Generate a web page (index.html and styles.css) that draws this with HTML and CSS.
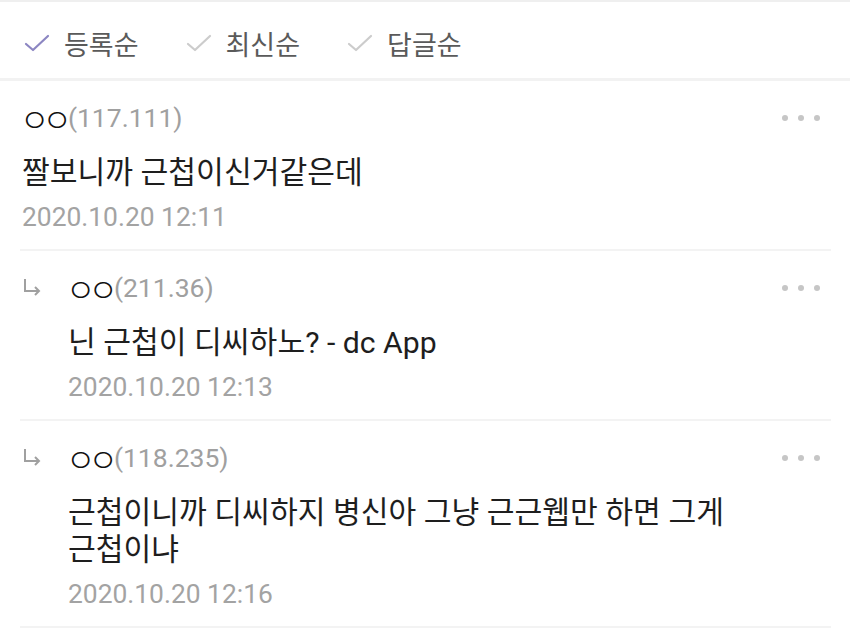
FILE: index.html
```html
<!DOCTYPE html>
<html lang="ko">
<head>
<meta charset="utf-8">
<link rel="stylesheet" href="styles.css">
</head>
<body>
<div class="page">
  <div class="topline"></div>
  <div class="tabs">
    <div class="tab active">
      <svg class="check" width="26" height="20" viewBox="0 0 26 20"><path d="M2 10 L9 16 L24 2" fill="none" stroke="currentColor" stroke-width="2.2" stroke-linecap="round" stroke-linejoin="round"/></svg>
      <span>등록순</span>
    </div>
    <div class="tab">
      <svg class="check" width="26" height="20" viewBox="0 0 26 20"><path d="M2 10 L9 16 L24 2" fill="none" stroke="currentColor" stroke-width="2.2" stroke-linecap="round" stroke-linejoin="round"/></svg>
      <span>최신순</span>
    </div>
    <div class="tab">
      <svg class="check" width="26" height="20" viewBox="0 0 26 20"><path d="M2 10 L9 16 L24 2" fill="none" stroke="currentColor" stroke-width="2.2" stroke-linecap="round" stroke-linejoin="round"/></svg>
      <span>답글순</span>
    </div>
  </div>
  <div class="list">
    <div class="comment">
      <div class="body">
        <div class="head">
          <div class="name"><span class="nick">ㅇㅇ</span><span class="ip">(117.111)</span></div>
          <div class="dots"><i></i><i></i><i></i></div>
        </div>
        <div class="text">짤보니까 근첩이신거같은데</div>
        <div class="date">2020.10.20 12:11</div>
      </div>
    </div>
    <div class="comment reply">
      <svg class="arrow" width="22" height="22" viewBox="0 0 22 22"><path d="M3 2 V14 H17 M13 10 L17 14 L13 18" fill="none" stroke="currentColor" stroke-width="2" stroke-linejoin="miter"/></svg>
      <div class="body">
        <div class="head">
          <div class="name"><span class="nick">ㅇㅇ</span><span class="ip">(211.36)</span></div>
          <div class="dots"><i></i><i></i><i></i></div>
        </div>
        <div class="text">닌 근첩이 디씨하노? - dc App</div>
        <div class="date">2020.10.20 12:13</div>
      </div>
    </div>
    <div class="comment reply">
      <svg class="arrow" width="22" height="22" viewBox="0 0 22 22"><path d="M3 2 V14 H17 M13 10 L17 14 L13 18" fill="none" stroke="currentColor" stroke-width="2" stroke-linejoin="miter"/></svg>
      <div class="body">
        <div class="head">
          <div class="name"><span class="nick">ㅇㅇ</span><span class="ip">(118.235)</span></div>
          <div class="dots"><i></i><i></i><i></i></div>
        </div>
        <div class="text">근첩이니까 디씨하지 병신아 그냥 근근웹만 하면 그게<br>근첩이냐</div>
        <div class="date">2020.10.20 12:16</div>
      </div>
    </div>
  </div>
</div>
</body>
</html>
```
FILE: styles.css
```css
html, body {
  margin: 0;
  padding: 0;
  background: #ffffff;
}
body {
  font-family: Roboto, "Noto Sans CJK KR", sans-serif;
  color: #222222;
}
.page {
  width: 850px;
  height: 637px;
  overflow: hidden;
}
.topline {
  height: 2px;
  background: #efefef;
}
.tabs {
  height: 70px;
  padding: 6px 0 0 24px;
  display: flex;
  align-items: center;
  gap: 47px;
  border-bottom: 3px solid #f2f2f2;
}
.tab {
  display: flex;
  align-items: center;
  gap: 14px;
  font-family: "Noto Sans CJK KR", sans-serif;
  font-size: 27px;
  color: #5a5a5a;
}
.check {
  color: #cccccc;
  margin-top: 2px;
}
.tab.active .check {
  color: #8c86c2;
}
.list {
  margin: 0 19px 0 20px;
}
.comment {
  display: flex;
  padding: 17px 0 12px 2px;
  border-bottom: 2px solid #f3f3f3;
}
.arrow {
  color: #a0a0a0;
  width: 22px;
  height: 22px;
  margin: 9px 24px 0 0;
  flex: none;
}
.body {
  flex: 1;
}
.head {
  display: flex;
  justify-content: space-between;
  align-items: center;
  height: 40px;
}
.name {
  display: flex;
  align-items: center;
  height: 40px;
  color: #111111;
}
.nick {
  font-family: "Noto Sans CJK KR", sans-serif;
  font-size: 32px;
  font-weight: 300;
  line-height: 40px;
  letter-spacing: -7px;
  margin-right: 3px;
  margin-left: -2px;
}
.ip {
  font-family: Roboto, sans-serif;
  font-size: 26.5px;
  line-height: 40px;
  color: #a0a0a0;
}
.dots {
  display: flex;
  gap: 10px;
  margin-right: 11px;
}
.dots i {
  width: 6px;
  height: 6px;
  border-radius: 50%;
  background: #c6c6c6;
}
.text {
  margin-top: 16px;
  font-family: Roboto, "Noto Sans CJK KR", sans-serif;
  font-size: 30.2px;
  line-height: 37px;
  color: #1e1e1e;
}
.date {
  margin-top: 6px;
  font-family: Roboto, sans-serif;
  font-size: 26.4px;
  line-height: 40px;
  color: #a3a3a3;
}
```
